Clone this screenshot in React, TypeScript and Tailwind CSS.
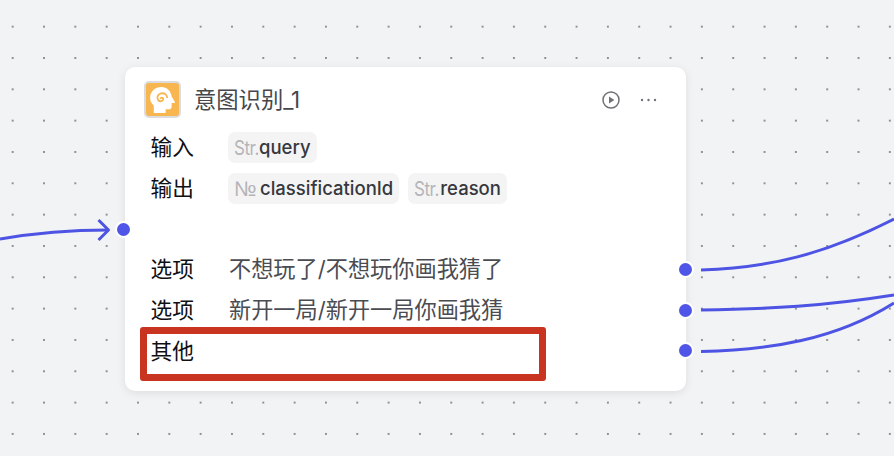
import React from "react";

const LABEL = "relative top-[-1px] w-[77.500px] shrink-0 text-[21.700px] leading-[28px] text-[#0f1014] ml-[-0.5px]";
const VALUE = "relative top-[-1px] ml-[1px] text-[22.200px] leading-[28px] text-[#4a4c52]";

function Tag({ kind, name, w, serif }: { kind: string; name: string; w: string; serif?: boolean }) {
  return (
    <span className="flex h-[31px] items-center rounded-[7px] bg-[#f4f4f5] px-[6px]">
      {serif ? (
        <span className={`${w} whitespace-nowrap font-['Liberation_Sans'] text-[21px] text-[#b4b5b9]`}>{kind}</span>
      ) : (
        <span className={`${w} origin-left scale-x-[0.85] whitespace-nowrap text-[20px] tracking-[-0.5px] text-[#b4b5b9]`}>{kind}</span>
      )}
      <span className="text-[18.500px] font-medium text-[#36383d]">{name}</span>
    </span>
  );
}

function Row({ label, children }: { label: string; children?: React.ReactNode }) {
  return (
    <div className="flex h-[41px] items-center">
      <span className={LABEL}>{label}</span>
      {children}
    </div>
  );
}

function Handle({ className }: { className: string }) {
  return <span className={`absolute h-[17px] w-[17px] rounded-full border-2 border-white bg-[#4f55e6] ${className}`} />;
}

export default function App() {
  return (
    <div
      className="relative h-[456px] w-[894px] overflow-hidden bg-[#f2f3f5] bg-[radial-gradient(circle,#8f9196_0.7px,transparent_1.2px)] bg-[size:31.33px_31.33px] bg-[position:-3px_11px]"
      style={{ fontFamily: 'Inter, "Noto Sans CJK SC", sans-serif' }}
    >
      <svg className="absolute left-0 top-0 h-[456px] w-[894px]" viewBox="0 0 894 456" fill="none">
        <g stroke="#4d53e3" strokeWidth="3">
          <path d="M0 239 C35 233 70 230 108 230" />
          <path d="M98.500 220 L108.500 230 L98.500 240" strokeLinejoin="round" />
          <path d="M701 270 C770 268 825 254 894 219" />
          <path d="M701 310 C770 309 825 306 894 295" />
          <path d="M701 351.500 C770 350 835 340 894 303" />
        </g>
      </svg>

      <div className="absolute left-[125px] top-[67px] h-[324px] w-[561px] rounded-[10px] bg-white shadow-[0_2px_10px_rgba(0,0,0,0.09)]">
        <div className="flex h-[60px] items-center pl-[19px] pr-[29px] pt-[5px]">
          <span className="flex h-[37px] w-[37px] items-center justify-center rounded-[5px] border-2 border-[#dcdcdf] bg-[#f7b650]">
            <svg width="27" height="28" viewBox="0 0 25 26">
              <path
                d="M11.500 1C5.500 1 1 5.300 1 11c0 3.200 1.400 5.500 3.400 7.300V25h11v-3.400h3.200c1.400 0 2.400-1 2.400-2.400v-3.400h2.200c.7 0 1-.7.7-1.200L21 9.800C20.300 4.700 16.600 1 11.500 1z"
                fill="#fff"
              />
              <path
                d="M10.800 11.200c1-.9 2.500-.1 2.300 1.300-.3 1.900-3.300 2.300-4.600.6C6.900 11 8 7.600 11.200 6.900c2.800-.6 5.300 1 5.600 3.700"
                fill="none"
                stroke="#f7b650"
                strokeWidth="1.700"
                strokeLinecap="round"
              />
            </svg>
          </span>
          <span className="ml-[13px] text-[22.300px] text-[#45474d]">意图识别_1</span>
          <span className="ml-auto flex items-center gap-[20px]">
            <svg width="18" height="18" viewBox="0 0 18 18" fill="none">
              <circle cx="9" cy="9" r="8" stroke="#6f7176" strokeWidth="1.500" />
              <path d="M7 5.500 L12.300 9 L7 12.500Z" fill="#6f7176" />
            </svg>
            <svg width="17" height="4" viewBox="0 0 17 4" fill="#6f7176">
              <circle cx="2" cy="2" r="1.200" />
              <circle cx="8.500" cy="2" r="1.200" />
              <circle cx="15" cy="2" r="1.200" />
            </svg>
          </span>
        </div>
        <div className="pl-[26px]">
          <Row label="输入">
            <Tag kind="Str." name="query" w="w-[25px]" />
          </Row>
          <Row label="输出">
            <div className="flex gap-[9px]">
              <Tag kind="№" name="classificationId" w="w-[26px]" serif />
              <Tag kind="Str." name="reason" w="w-[26px]" />
            </div>
          </Row>
          <div className="h-[40px]" />
          <Row label="选项">
            <span className={VALUE}>不想玩了/不想玩你画我猜了</span>
          </Row>
          <Row label="选项">
            <span className={VALUE}>新开一局/新开一局你画我猜</span>
          </Row>
          <Row label="其他" />
        </div>
        <div className="absolute left-[15px] top-[260px] h-[54px] w-[406px] rounded-[3px] border-[7px] border-[#c93420]" />
        <Handle className="left-[-10px] top-[154px]" />
        <Handle className="left-[552px] top-[194px]" />
        <Handle className="left-[552px] top-[235px]" />
        <Handle className="left-[552px] top-[275px]" />
      </div>
    </div>
  );
}
